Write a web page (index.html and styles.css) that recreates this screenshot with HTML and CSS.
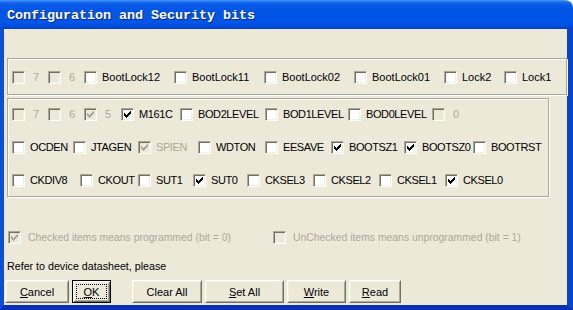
FILE: index.html
```html
<!DOCTYPE html>
<html lang="en">
<head>
  <meta charset="UTF-8" />
  <title>Configuration and Security bits</title>
  <link rel="stylesheet" href="styles.css">
</head>
<body>

  <!-- check mark used by every ticked box -->
  <svg class="defs" width="0" height="0">
    <symbol id="tick" viewBox="0 0 7 7">
      <path d="M6 0h1v1H6z M5 1h2v1H5z M0 2h1v1H0z M4 2h3v1H4z M0 3h2v1H0z M3 3h3v1H3z M0 4h5v1H0z M1 5h3v1H1z M2 6h1v1H2z" fill="currentColor" />
    </symbol>
  </svg>

  <div class="window">
    <div class="titlebar">Configuration and Security bits</div>

    <div class="client">

      <!-- Lock bits -->
      <div class="group group-lock">
        <div class="row row-lock">
          <label class="item off"><span class="box"></span><span class="num">7</span></label>
          <label class="item off"><span class="box"></span><span class="num">6</span></label>
          <label class="item"><span class="box"></span>BootLock12</label>
          <label class="item"><span class="box"></span>BootLock11</label>
          <label class="item"><span class="box"></span>BootLock02</label>
          <label class="item"><span class="box"></span>BootLock01</label>
          <label class="item"><span class="box"></span>Lock2</label>
          <label class="item"><span class="box"></span>Lock1</label>
        </div>
      </div>

      <!-- Fuse bits -->
      <div class="group group-fuse">
        <div class="row row-ext">
          <label class="item off"><span class="box"></span><span class="num">7</span></label>
          <label class="item off"><span class="box"></span><span class="num">6</span></label>
          <label class="item off"><span class="box"><svg class="tick"><use href="#tick" /></svg></span><span class="num">5</span></label>
          <label class="item"><span class="box"><svg class="tick"><use href="#tick" /></svg></span>M161C</label>
          <label class="item"><span class="box"></span>BOD2LEVEL</label>
          <label class="item"><span class="box"></span>BOD1LEVEL</label>
          <label class="item"><span class="box"></span>BOD0LEVEL</label>
          <label class="item off"><span class="box"></span><span class="num">0</span></label>
        </div>
        <div class="row row-high">
          <label class="item"><span class="box"></span>OCDEN</label>
          <label class="item"><span class="box"></span>JTAGEN</label>
          <label class="item off"><span class="box"><svg class="tick"><use href="#tick" /></svg></span>SPIEN</label>
          <label class="item"><span class="box"></span>WDTON</label>
          <label class="item"><span class="box"></span>EESAVE</label>
          <label class="item"><span class="box"><svg class="tick"><use href="#tick" /></svg></span>BOOTSZ1</label>
          <label class="item"><span class="box"><svg class="tick"><use href="#tick" /></svg></span>BOOTSZ0</label>
          <label class="item"><span class="box"></span>BOOTRST</label>
        </div>
        <div class="row row-low">
          <label class="item"><span class="box"></span>CKDIV8</label>
          <label class="item"><span class="box"></span>CKOUT</label>
          <label class="item"><span class="box"></span>SUT1</label>
          <label class="item"><span class="box"><svg class="tick"><use href="#tick" /></svg></span>SUT0</label>
          <label class="item"><span class="box"></span>CKSEL3</label>
          <label class="item"><span class="box"></span>CKSEL2</label>
          <label class="item"><span class="box"></span>CKSEL1</label>
          <label class="item"><span class="box"><svg class="tick"><use href="#tick" /></svg></span>CKSEL0</label>
        </div>
      </div>

      <!-- Legend -->
      <div class="row legend">
        <label class="item off"><span class="box"><svg class="tick"><use href="#tick" /></svg></span>Checked items means programmed (bit = 0)</label>
        <label class="item off"><span class="box"></span>UnChecked items means unprogrammed (bit = 1)</label>
      </div>

      <div class="note">Refer to device datasheet, please</div>

      <div class="buttons">
        <button class="btn btn-cancel"><u>C</u>ancel</button>
        <button class="btn btn-default btn-ok"><span class="focus"><u>O</u>K</span></button>
        <button class="btn btn-clear">Clear All</button>
        <button class="btn btn-set"><u>S</u>et All</button>
        <button class="btn btn-write"><u>W</u>rite</button>
        <button class="btn btn-read"><u>R</u>ead</button>
      </div>

    </div>
  </div>

</body>
</html>
```

FILE: styles.css
```css
* {
  margin: 0;
  padding: 0;
  box-sizing: border-box;
}

body {
  background: #fff;
  font-family: "Liberation Sans", Arial, sans-serif;
  font-size: 11px;
  color: #000;
}

.defs {
  position: absolute;
  width: 0;
  height: 0;
}

/* Window frame */
.window {
  width: 573px;
  height: 310px;
  display: flex;
  flex-direction: column;
  border-top-right-radius: 8px;
  overflow: hidden;
}

.titlebar {
  height: 29px;
  flex: none;
  padding: 1px 0 0 7px;
  display: flex;
  align-items: center;
  font-family: "Liberation Mono", "Courier New", monospace;
  font-size: 13.5px;
  font-weight: bold;
  letter-spacing: -0.1px;
  color: #fff;
  text-shadow: 1px 1px #0a2a8c;
  background: linear-gradient(to bottom,
    #4a9cff 0px, #1a6cf0 2px, #0758e6 5px, #0054e3 12px,
    #0056e8 22px, #004bd8 27px, #003cc0 29px);
}

.client {
  flex: 1;
  background: #ece9d8;
  border-left: 4px solid #0a4ed9;
  border-right: 6px solid #0843cc;
  border-bottom: 5px solid #0a30b4;
  padding-top: 29px;
}

/* Group boxes */
.group {
  margin-left: 3px;
  border: 1px solid #aca899;
  box-shadow: inset 1px 1px #fff, 1px 1px #fff;
  padding-left: 4px;
}

.group-lock {
  width: 560px;
  padding-top: 12px;
  padding-bottom: 10px;
}

.group-fuse {
  width: 542px;
  margin-top: 3px;
  padding-top: 9px;
  padding-bottom: 9px;
  display: flex;
  flex-direction: column;
  gap: 20px;
}

/* Checkbox rows */
.row {
  display: grid;
  align-items: center;
  height: 13px;
}

.row-lock { grid-template-columns: 36px 36px 90px 90px 90px 90px 60px auto; }
.row-ext  { grid-template-columns: 36px 36px 37px 59px 85px 83px 84px auto; }
.row-high { grid-template-columns: 61px 65px 60px 67px 66px 73px 69px auto; }
.row-low  { grid-template-columns: 68px 58px 55px 54px 66px 66px 66px auto; }

.item {
  display: flex;
  align-items: center;
  gap: 5px;
  height: 13px;
  line-height: 13px;
  white-space: nowrap;
}

.group-fuse .item {
  letter-spacing: -0.4px;
}

.item.off {
  color: #aca899;
}

.num {
  margin-left: 3px;
}

.box {
  width: 13px;
  height: 13px;
  flex: none;
  background: #fff;
  border: 1px solid;
  border-color: #aca899 #fff #fff #aca899;
  box-shadow: inset 1px 1px #716f64, inset -1px -1px #f1efe2;
  color: #000;
}

.off .box {
  background: #ece9d8;
  color: #aca899;
}

.tick {
  display: block;
  width: 7px;
  height: 7px;
  margin: 2px 0 0 2px;
}

/* Legend + note */
.legend {
  grid-template-columns: 265px auto;
  margin-top: 34px;
  padding-left: 4px;
}

.legend .item {
  gap: 7px;
  font-size: 10.4px;
}

.note {
  margin-top: 16px;
  padding-left: 3px;
  line-height: 13px;
  font-size: 10.7px;
}

/* Buttons */
.buttons {
  display: flex;
  gap: 3px;
  margin-top: 7px;
  padding-left: 1px;
}

.btn {
  height: 23px;
  background: #ece9d8;
  border: 1px solid;
  border-color: #fff #716f64 #716f64 #fff;
  box-shadow: inset 1px 1px #f1efe2, inset -1px -1px #aca899;
  font-family: "Liberation Sans", Arial, sans-serif;
  font-size: 11px;
  color: #000;
}

.btn-default {
  border-color: #000;
  box-shadow: inset 1px 1px #fff, inset -1px -1px #716f64,
              inset 2px 2px #f1efe2, inset -2px -2px #aca899;
  padding: 3px;
}

.focus {
  display: flex;
  align-items: center;
  justify-content: center;
  height: 100%;
  border: 1px dotted #000;
}

.btn-cancel { width: 64px; }
.btn-ok     { width: 39px; }
.btn-clear  { width: 70px; margin-left: 18px; }
.btn-set    { width: 79px; }
.btn-write  { width: 59px; }
.btn-read   { width: 52px; }
```
